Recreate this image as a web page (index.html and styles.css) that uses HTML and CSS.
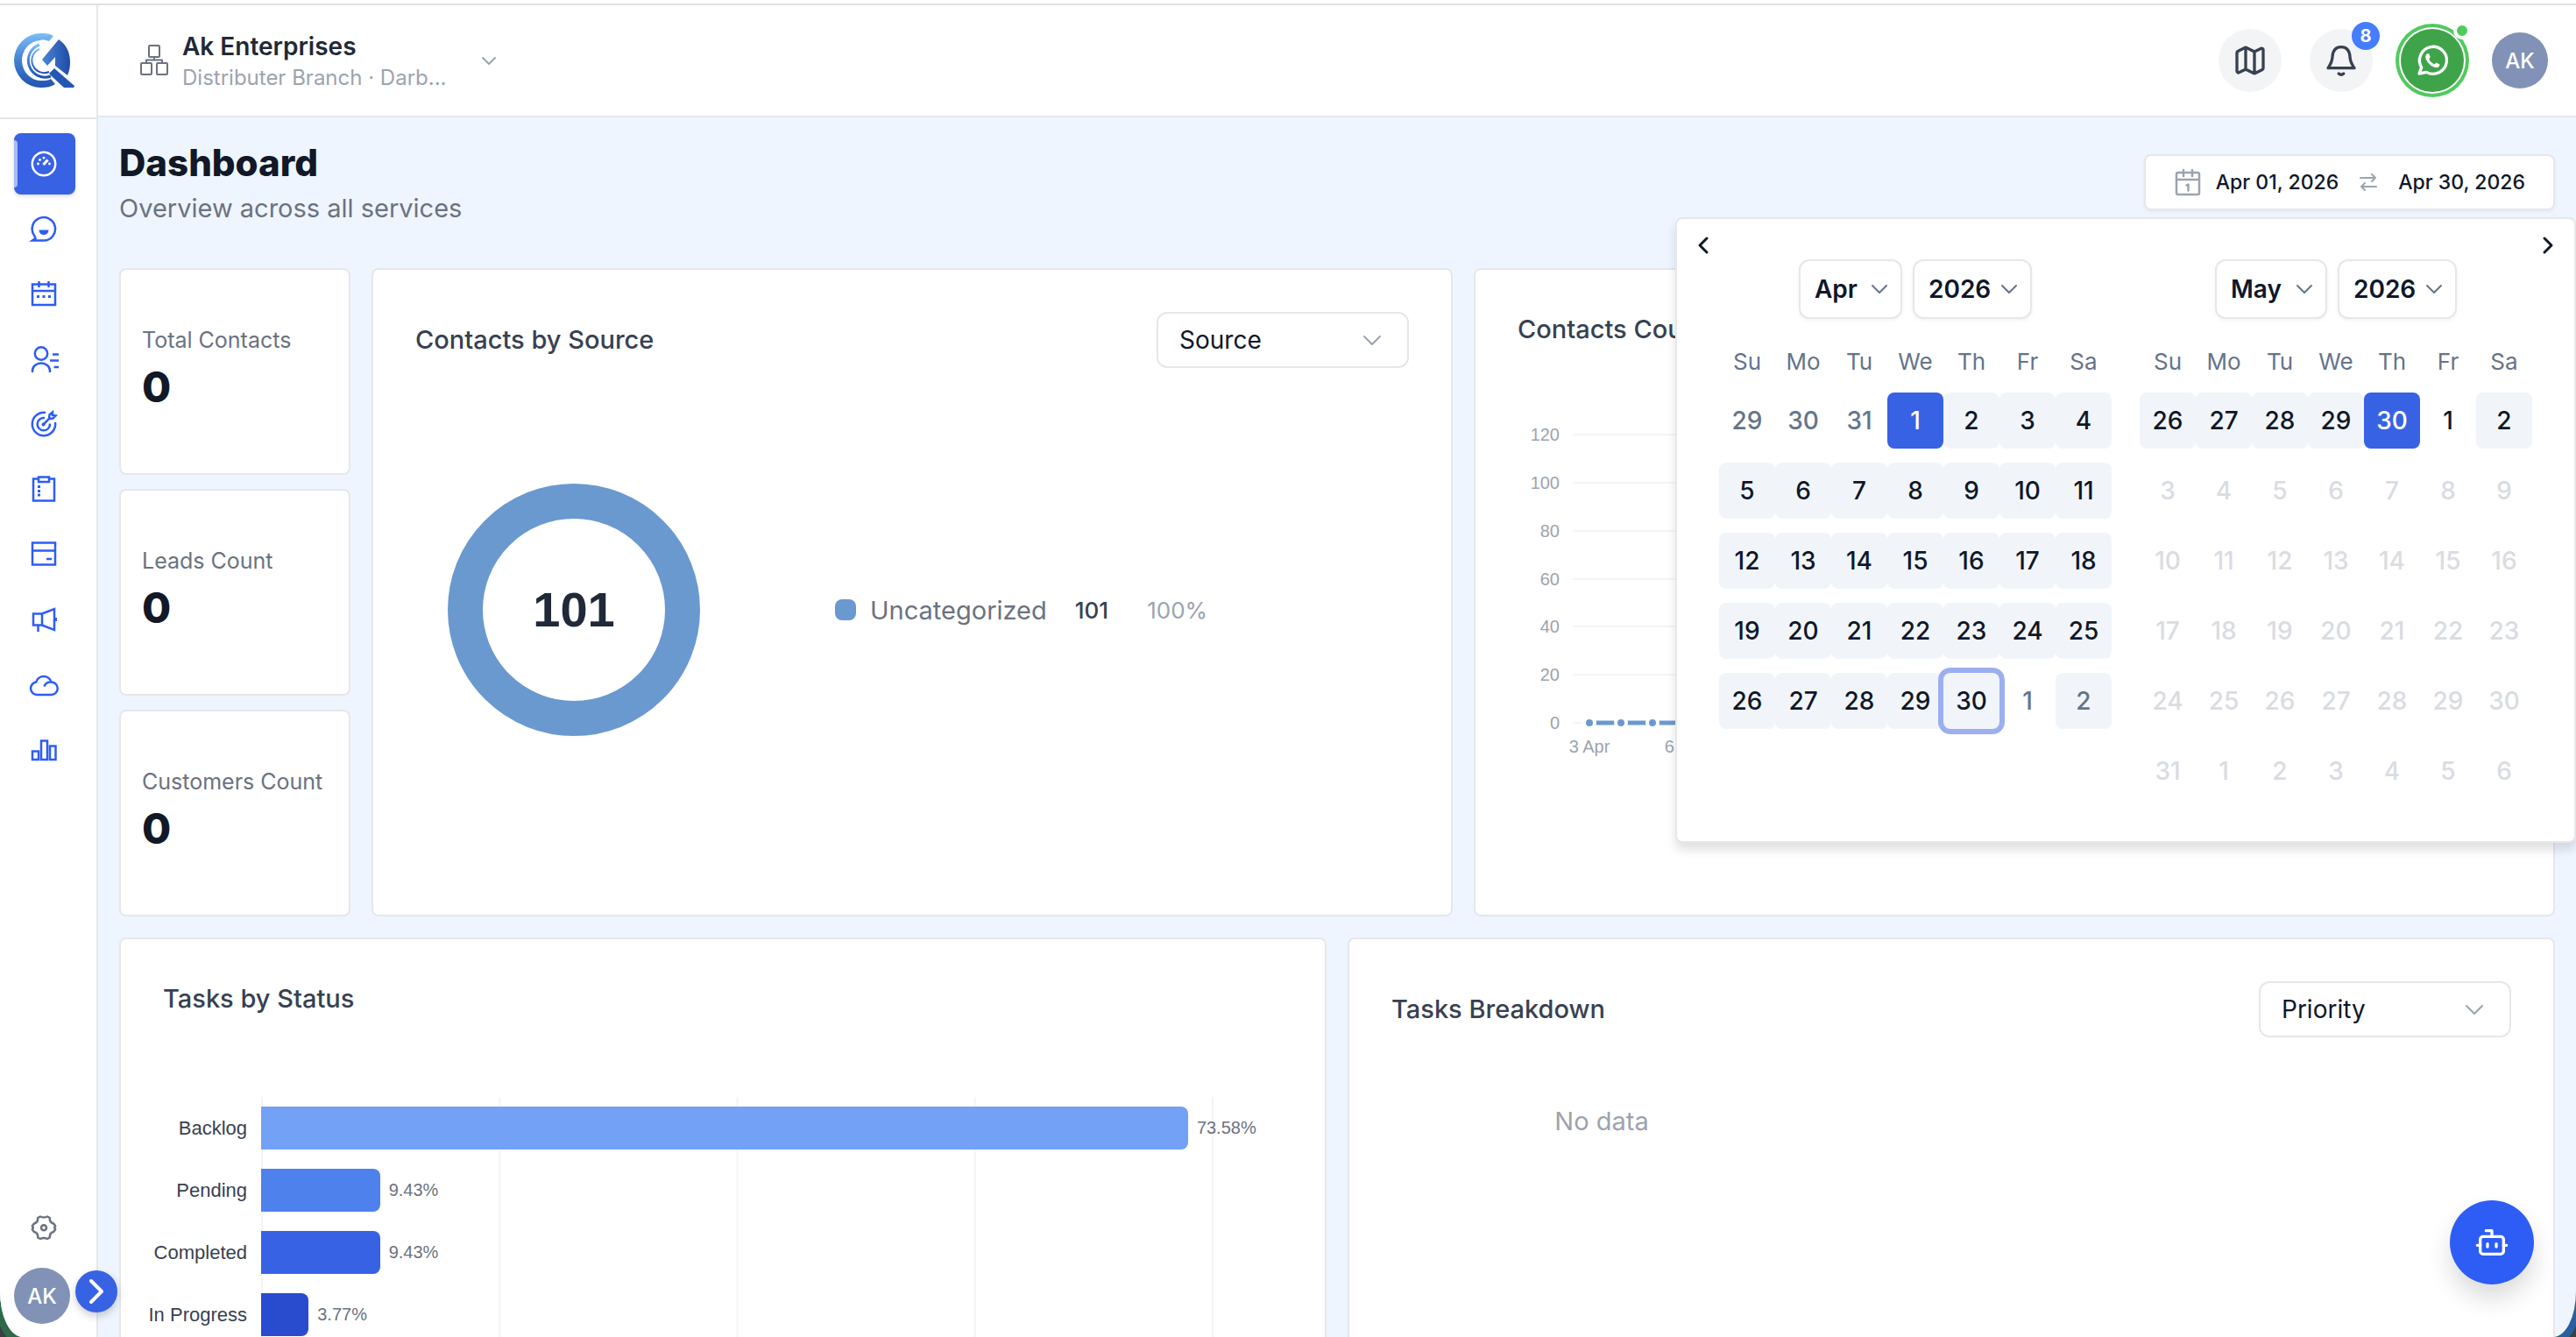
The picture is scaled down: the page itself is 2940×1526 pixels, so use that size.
FILE: index.html
```html
<!DOCTYPE html>
<html lang="en">
<head>
<meta charset="UTF-8">
<meta name="viewport" content="width=device-width, initial-scale=1.0">
<title>Dashboard</title>
<link rel="stylesheet" href="styles.css">
</head>
<body>

<div class="app">
  <aside class="sidebar">
    <a class="logo" href="#" aria-label="Home">
      <svg width="70" height="64" viewBox="0 0 70 64" fill="none">
        <defs>
          <linearGradient id="logoLight" x1="0" y1="0" x2="0" y2="1">
            <stop offset="0" stop-color="#7cbcf8"/>
            <stop offset="0.5" stop-color="#4380d2"/>
            <stop offset="1" stop-color="#2153b0"/>
          </linearGradient>
          <linearGradient id="logoDark" x1="0" y1="0" x2="1" y2="0">
            <stop offset="0" stop-color="#4a86d8"/>
            <stop offset="1" stop-color="#1f4ba6"/>
          </linearGradient>
        </defs>
        <path d="M45 3C40 0 36 0 31 0A31 31 0 0 0 31 62C37 62 42 61 47 58L42 52C39 54 35 54 32 54A22 23 0 0 1 30 8C33 7 37 8 40 9Z" fill="url(#logoLight)"/>
        <path class="ring" d="M29 13A19 19 0 1 0 42 49" stroke-width="3"/>
        <path class="ring" d="M29 18A14 14 0 1 0 40 44" stroke-width="2"/>
        <path d="M51 7C60 13 64 22 64 33C64 39 63 43 61 48L47 37V27L38 37L32 30Z" fill="url(#logoDark)"/>
        <path d="M46 40L69 60L68 62H57L44 50L40 46Z" fill="#2457b4"/>
      </svg>
    </a>
    <nav class="nav" aria-label="Main">
      <a class="nav-link active" href="#" aria-label="Dashboard">
        <svg class="icon" viewBox="0 0 32 32"><circle cx="16" cy="16" r="13.2"/><path d="M15.500 17L20.500 11.500" stroke-width="3.200"/><g class="dots"><circle cx="9.500" cy="16" r="1.400"/><circle cx="11.500" cy="11.500" r="1.400"/><circle cx="16" cy="9.200" r="1.400"/><circle cx="22.500" cy="16" r="1.400"/></g></svg>
      </a>
      <a class="nav-link" href="#" aria-label="Chat">
        <svg class="icon" viewBox="0 0 32 32"><path d="M3 29.500H16A13.200 13.200 0 1 0 5.500 24.500L6.500 27Z"/><path d="M10.500 17.500H21.500A5.500 5.500 0 0 1 10.500 17.500Z" class="solid"/></svg>
      </a>
      <a class="nav-link" href="#" aria-label="Calendar">
        <svg class="icon" viewBox="0 0 32 32"><path d="M3 5.500H29V29H3ZM3 13H29M10.500 2V9M21.500 2V9"/><path d="M8 19.500H11M14.500 19.500H17.500M21 19.500H24" stroke-width="3"/></svg>
      </a>
      <a class="nav-link" href="#" aria-label="Contacts">
        <svg class="icon" viewBox="0 0 32 32"><circle cx="13" cy="9.500" r="7.200"/><path d="M3 31V29A10 8.500 0 0 1 23 29V31M26 10.500H33M23 17.500H33M27.500 25H33"/></svg>
      </a>
      <a class="nav-link" href="#" aria-label="Leads">
        <svg class="icon" viewBox="0 0 32 32"><path d="M18 3A13.200 13.200 0 1 0 29 14M17 9A7.200 7.200 0 1 0 23 15.500M16 16L22 10L22.500 5.500L26 2.500V6L29.500 6.500L26.500 9.500L22 10"/><circle cx="15.500" cy="16.500" r="2" class="solid"/></svg>
      </a>
      <a class="nav-link" href="#" aria-label="Tasks">
        <svg class="icon" viewBox="0 0 32 32"><path d="M10 4.500H4V29.500H28V4.500H22M10 2.500H22V8H10Z"/><path d="M9 13.500H12M9 18.500H12M9 23H12" stroke-width="2.800"/></svg>
      </a>
      <a class="nav-link" href="#" aria-label="Payments">
        <svg class="icon" viewBox="0 0 32 32"><path d="M3 3.500H29V28.500H3ZM3 12.500H29M19 22H25"/></svg>
      </a>
      <a class="nav-link" href="#" aria-label="Campaigns">
        <svg class="icon" viewBox="0 0 32 32"><path d="M4 9.500H14L28 4V28L14 22.500H4ZM14 9.500V22.500M9.500 23V30"/><path d="M28 16H31" stroke-width="4"/></svg>
      </a>
      <a class="nav-link" href="#" aria-label="Cloud">
        <svg class="icon" viewBox="0 0 32 32"><path d="M8 28H24.500A7 7 0 0 0 24.500 13.500A9 9 0 0 0 7.200 13.500A7.300 7.300 0 0 0 8 28ZM16.500 18.500C17.500 15.500 20.500 13.200 24.500 13.500"/></svg>
      </a>
      <a class="nav-link" href="#" aria-label="Reports">
        <svg class="icon" viewBox="0 0 32 32"><path d="M3 18.500H10V28H3ZM13 6.500H20V28H13ZM23 12.500H29.500V28H23Z"/></svg>
      </a>
    </nav>
    <div class="sidebar-bottom">
      <a class="settings" href="#" aria-label="Settings">
        <svg class="icon" viewBox="0 0 32 32"><path d="M12 3.500Q16 5.500 20 3.500L22.800 5Q22.500 10.500 27 11.500Q28.500 13 29.200 14.500Q27.200 16.200 29.200 18Q28.500 19.500 27 21Q22.500 22 22.800 27.500L20 29Q16 27 12 29L9.200 27.500Q9.500 22 5 21Q3.500 19.500 2.800 18Q4.800 16.200 2.800 14.500Q3.500 13 5 11.500Q9.500 10.500 9.200 5Z"/><circle cx="16" cy="16.200" r="3"/></svg>
      </a>
      <button class="avatar" type="button">AK</button>
    </div>
    <button class="toggle" type="button" aria-label="Expand menu">
      <svg width="48" height="48" viewBox="0 0 48 48"><path d="M18 12L30 24L18 36"/></svg>
    </button>
  </aside>

  <div class="main">
    <header class="topbar">
      <button class="org" type="button">
        <svg class="org-icon" width="32" height="36" viewBox="0 0 32 36"><rect x="10" y="1" width="12" height="13" rx="1"/><rect x="1" y="21" width="12" height="13" rx="1"/><rect x="19" y="21" width="12" height="13" rx="1"/><path d="M16 14V17.500M7 21V17.500H25V21"/></svg>
        <span class="org-text">
          <span class="org-name">Ak Enterprises</span>
          <span class="org-branch">Distributer Branch · Darb...</span>
        </span>
        <svg class="chevron" width="20" height="20" viewBox="0 0 20 20"><path d="M3 7L10 14L17 7"/></svg>
      </button>
      <div class="actions">
        <button class="round" type="button" aria-label="Map">
          <svg width="40" height="40" viewBox="0 0 24 24"><path d="M14.100 5.600a2 2 0 0 0 1.800 0l3.700-1.800A1 1 0 0 1 21 4.600v12.800a1 1 0 0 1-.6.900l-4.500 2.300a2 2 0 0 1-1.800 0l-4.200-2.100a2 2 0 0 0-1.800 0l-3.700 1.800A1 1 0 0 1 3 19.400V6.600a1 1 0 0 1 .6-.9l4.500-2.300a2 2 0 0 1 1.800 0ZM15 5.800v15M9 3.200v15"/></svg>
        </button>
        <button class="round" type="button" aria-label="Notifications">
          <svg width="40" height="40" viewBox="0 0 24 24"><path d="M3 17.200H21C19.500 15 18.200 13.200 18 9.500C17.700 5 15.500 2.800 12 2.800S6.300 5 6 9.500C5.800 13.200 4.500 15 3 17.200ZM10.300 21Q12 22.500 13.700 21"/></svg>
          <span class="badge">8</span>
        </button>
        <button class="round whatsapp" type="button" aria-label="WhatsApp">
          <svg width="40" height="40" viewBox="0 0 24 24"><path d="M3 21L4.600 16.700A9.300 9.300 0 1 1 8 20Z"/><path class="phone" d="M8.500 7.300C7.300 8 7 9.500 7.700 11.200C9 14 11 15.900 13.900 16.800C15.500 17.200 17 16.300 17.200 14.800L14.700 13.500L13.500 14.700C11.700 13.900 10.500 12.800 9.700 11L10.700 9.800L9.700 7.300Z"/></svg>
          <span class="online"></span>
        </button>
        <button class="avatar" type="button">AK</button>
      </div>
    </header>

    <main class="content">
      <div class="page-head">
        <div>
          <h1>Dashboard</h1>
          <p class="subtitle">Overview across all services</p>
        </div>
        <div class="range">
          <button class="range-field" type="button">
            <svg class="range-icon" width="32" height="32" viewBox="0 0 32 32"><rect x="3" y="5" width="26" height="25" rx="2"/><path d="M3 13H29M11 2V9M21 2V9M14.500 19.500L16.500 18.500V25.500"/></svg>
            <span>Apr 01, 2026</span>
            <svg class="swap-icon" width="20" height="24" viewBox="0 0 20 24"><path d="M1 7H18M14 3L18 7L14 11M19 17H2M6 13L2 17L6 21"/></svg>
            <span>Apr 30, 2026</span>
          </button>

          <div class="picker">
            <button class="step prev" type="button" aria-label="Previous month">
              <svg width="32" height="32" viewBox="0 0 32 32"><path d="M20 8L12 16L20 24"/></svg>
            </button>
            <button class="step next" type="button" aria-label="Next month">
              <svg width="32" height="32" viewBox="0 0 32 32"><path d="M12 8L20 16L12 24"/></svg>
            </button>
            <div class="month">
              <div class="month-head">
                <span class="select month-select"><select aria-label="Start month"><option>Apr</option></select><svg class="chevron" width="20" height="20" viewBox="0 0 20 20"><path d="M2 6L10 14L18 6"/></svg></span>
                <span class="select year-select"><select aria-label="Start year"><option>2026</option></select><svg class="chevron" width="20" height="20" viewBox="0 0 20 20"><path d="M2 6L10 14L18 6"/></svg></span>
              </div>
              <table class="days" id="april"></table>
            </div>
            <div class="month">
              <div class="month-head">
                <span class="select month-select wide"><select aria-label="End month"><option>May</option></select><svg class="chevron" width="20" height="20" viewBox="0 0 20 20"><path d="M2 6L10 14L18 6"/></svg></span>
                <span class="select year-select"><select aria-label="End year"><option>2026</option></select><svg class="chevron" width="20" height="20" viewBox="0 0 20 20"><path d="M2 6L10 14L18 6"/></svg></span>
              </div>
              <table class="days" id="may"></table>
            </div>
          </div>
        </div>
      </div>

      <div class="row-top">
        <div class="stats">
          <section class="card stat"><h2>Total Contacts</h2><p>0</p></section>
          <section class="card stat"><h2>Leads Count</h2><p>0</p></section>
          <section class="card stat"><h2>Customers Count</h2><p>0</p></section>
        </div>

        <section class="card panel">
          <div class="panel-head">
            <h2>Contacts by Source</h2>
            <span class="select filter"><select aria-label="Group contacts by"><option>Source</option></select><svg class="chevron" width="24" height="24" viewBox="0 0 24 24"><path d="M3 8L12 17L21 8"/></svg></span>
          </div>
          <div class="source">
            <div class="donut">101</div>
            <div class="legend">
              <span class="swatch"></span>
              <span class="legend-name">Uncategorized</span>
              <span class="legend-count">101</span>
              <span class="legend-pct">100%</span>
            </div>
          </div>
        </section>

        <section class="card panel">
          <h2>Contacts Count</h2>
          <svg class="line-chart" id="lineChart" viewBox="0 0 1134 420" role="img" aria-label="Contacts count per day"></svg>
        </section>
      </div>

      <div class="row-bottom">
        <section class="card panel">
          <h2>Tasks by Status</h2>
          <div class="bars">
            <div class="bar-row"><span class="bar-label">Backlog</span><div class="bar-track"><div class="bar backlog" style="width: 97.5%"></div><span class="bar-value">73.58%</span></div></div>
            <div class="bar-row"><span class="bar-label">Pending</span><div class="bar-track"><div class="bar pending" style="width: 12.5%"></div><span class="bar-value">9.43%</span></div></div>
            <div class="bar-row"><span class="bar-label">Completed</span><div class="bar-track"><div class="bar completed" style="width: 12.5%"></div><span class="bar-value">9.43%</span></div></div>
            <div class="bar-row"><span class="bar-label">In Progress</span><div class="bar-track"><div class="bar progress" style="width: 5%"></div><span class="bar-value">3.77%</span></div></div>
          </div>
        </section>

        <section class="card panel">
          <div class="panel-head">
            <h2>Tasks Breakdown</h2>
            <span class="select filter"><select aria-label="Group tasks by"><option>Priority</option></select><svg class="chevron" width="24" height="24" viewBox="0 0 24 24"><path d="M3 8L12 17L21 8"/></svg></span>
          </div>
          <p class="no-data">No data</p>
        </section>
      </div>
    </main>
  </div>

  <button class="fab" type="button" aria-label="Assistant">
    <svg width="40" height="40" viewBox="0 0 24 24"><path d="M12 8V4H8M2 14H4M20 14H22M15 13V15M9 13V15"/><rect x="4" y="8" width="16" height="12" rx="2"/></svg>
  </button>
</div>

<script src="script.js"></script>
</body>
</html>
```
FILE: styles.css
```css
* {
  box-sizing: border-box;
}
body {
  margin: 0;
  height: 100vh;
  overflow: hidden;
  border-top: 4px solid #fff;
  background-color: #3a3f40;
  font-family: Inter, "Liberation Sans", sans-serif;
  font-size: 28px;
  color: #0f172a;
}
h1, h2, p {
  margin: 0;
}
button, select {
  font: inherit;
  color: inherit;
  border: none;
  background: none;
  padding: 0;
  cursor: pointer;
}
svg {
  fill: none;
  stroke: currentColor;
  stroke-width: 2;
  stroke-linecap: round;
  stroke-linejoin: round;
  flex-shrink: 0;
}

.app {
  display: flex;
  height: 100%;
  border-top: 2px solid #e0e0e0;
  border-bottom-left-radius: 26px 52px;
  border-bottom-right-radius: 26px 52px;
  background-color: #eef5fe;
  box-shadow: -6px 6px 0 #2c6a4a, 6px 6px 0 #2a5f9f;
}

/* Sidebar */
.sidebar {
  position: relative;
  display: flex;
  flex-direction: column;
  width: 112px;
  flex-shrink: 0;
  background-color: #fff;
  border-right: 2px solid #e5e7eb;
  border-bottom-left-radius: 26px 52px;
}
.logo {
  display: flex;
  align-items: center;
  height: 130px;
  padding-left: 16px;
  border-bottom: 2px solid #e5e7eb;
}
.logo svg {
  stroke: none;
  stroke-linecap: butt;
}
.logo .ring {
  stroke: url(#logoLight);
}
.nav {
  display: flex;
  flex-direction: column;
  justify-content: space-between;
  height: 738px;
  margin: 16px 0 0 16px;
}
.nav-link {
  display: flex;
  align-items: center;
  justify-content: center;
  width: 70px;
  height: 70px;
  padding-right: 3px;
  border-radius: 8px;
  color: #2d5df4;
}
.nav-link.active {
  position: relative;
  background-color: #3862e4;
  color: #fff;
  box-shadow: 0 2px 4px rgba(0, 0, 0, 0.15);
}
.nav-link.active::before {
  content: "";
  position: absolute;
  left: 0;
  top: 8px;
  bottom: 8px;
  width: 4px;
  border-radius: 0 4px 4px 0;
  background-color: #a9bbf4;
}
.icon {
  width: 32px;
  height: 32px;
  stroke-width: 2.5;
  stroke-linecap: butt;
  stroke-linejoin: miter;
  overflow: visible;
}
.icon .dots, .icon .solid {
  fill: currentColor;
  stroke: none;
}
.sidebar-bottom {
  display: flex;
  flex-direction: column;
  gap: 30px;
  margin-top: auto;
  padding: 0 0 15px 16px;
}
.settings {
  display: flex;
  justify-content: center;
  width: 67px;
  color: #6b7280;
}
.settings .icon {
  stroke-linejoin: round;
}
.avatar {
  width: 64px;
  height: 64px;
  border-radius: 50%;
  background-color: #8192b6;
  color: #fff;
  font-size: 24px;
  font-weight: 500;
}
.toggle {
  position: absolute;
  right: -24px;
  bottom: 28px;
  width: 48px;
  height: 48px;
  border-radius: 50%;
  background-color: #3862e4;
  color: #fff;
  box-shadow: 0 4px 10px rgba(0, 0, 0, 0.2);
}
.toggle svg {
  display: block;
  stroke-width: 4;
}

/* Top bar */
.main {
  flex: 1;
  min-width: 0;
  overflow: hidden;
  border-bottom-right-radius: 26px 52px;
}
.topbar {
  display: flex;
  align-items: center;
  justify-content: space-between;
  height: 128px;
  padding: 0 32px 0 48px;
  background-color: #fff;
  border-bottom: 2px solid #e5e7eb;
}
.org {
  display: flex;
  align-items: center;
  gap: 16px;
  text-align: left;
}
.org-icon {
  color: #6b7280;
}
.org-text {
  display: flex;
  flex-direction: column;
  width: 324px;
  padding-top: 4px;
}
.org-name {
  font-size: 28px;
  line-height: 36px;
  font-weight: 600;
  color: #1f2937;
}
.org-branch {
  font-size: 24px;
  line-height: 36px;
  color: #9ca3af;
}
.chevron {
  color: #9ca3af;
}
.actions {
  display: flex;
  align-items: center;
  gap: 32px;
}
.round {
  position: relative;
  display: flex;
  align-items: center;
  justify-content: center;
  width: 72px;
  height: 72px;
  border-radius: 50%;
  background-color: #f3f4f6;
  color: #374151;
}
.badge {
  position: absolute;
  top: -8px;
  right: -8px;
  width: 32px;
  height: 32px;
  border-radius: 50%;
  background-color: #447dff;
  color: #fff;
  font-size: 20px;
  line-height: 32px;
  font-weight: 700;
  text-align: center;
}
.whatsapp {
  background-color: #3fa34a;
  color: #fff;
  box-shadow: 0 0 0 2px #fff, 0 0 0 6px #51c95f;
}
.whatsapp .phone {
  fill: currentColor;
  stroke: none;
}
.online {
  position: absolute;
  top: -8px;
  right: -8px;
  width: 20px;
  height: 20px;
  border: 4px solid #fff;
  border-radius: 50%;
  background-color: #51c95f;
}

/* Page heading and date range */
.content {
  padding: 24px;
}
.page-head {
  display: flex;
  align-items: center;
  justify-content: space-between;
  margin-bottom: 48px;
}
h1 {
  font-size: 42px;
  line-height: 56px;
  font-weight: 800;
  color: #111827;
}
.subtitle {
  margin-top: 4px;
  font-size: 29px;
  line-height: 40px;
  color: #6b7280;
}
.range {
  position: relative;
}
.range-field {
  display: flex;
  align-items: center;
  gap: 16px;
  height: 64px;
  padding: 0 32px;
  border: 2px solid #e5e7eb;
  border-radius: 8px;
  background-color: #fff;
  box-shadow: 0 2px 4px rgba(0, 0, 0, 0.05);
  font-size: 23px;
  font-weight: 500;
}
.range-icon {
  color: #9ca3af;
  stroke-width: 2.5;
}
.swap-icon {
  margin: 0 8px;
  color: #9ca3af;
}
.picker {
  position: absolute;
  z-index: 5;
  top: calc(100% + 8px);
  right: -24px;
  display: flex;
  gap: 32px;
  padding: 46px 48px 40px;
  border: 2px solid #e5e7eb;
  border-radius: 8px;
  background-color: #fff;
  box-shadow: 0 8px 12px rgba(0, 0, 0, 0.12);
  font-size: 28px;
}
.step {
  position: absolute;
  top: 14px;
  width: 32px;
  height: 32px;
}
.step svg {
  display: block;
  stroke-width: 3;
}
.prev {
  left: 14px;
}
.next {
  right: 14px;
}
.month-head {
  display: flex;
  justify-content: center;
  gap: 12px;
}
.select {
  position: relative;
  display: inline-block;
}
.select select {
  appearance: none;
  width: 100%;
  height: 100%;
  border: 2px solid #e5e7eb;
  border-radius: 12px;
  background-color: #fff;
}
.select .chevron {
  position: absolute;
  top: 0;
  bottom: 0;
  right: 16px;
  margin: auto;
  pointer-events: none;
}
.month-select, .year-select {
  width: 118px;
  height: 68px;
  font-weight: 600;
}
.month-select.wide {
  width: 128px;
}
.year-select {
  width: 136px;
}
.month-select select, .year-select select {
  padding-left: 16px;
  box-shadow: 0 2px 4px rgba(0, 0, 0, 0.05);
}
.month-head .chevron {
  color: #64748b;
}
.days {
  margin-top: 22px;
  border-collapse: separate;
  border-spacing: 0;
}
.days th {
  width: 64px;
  height: 54px;
  padding: 0 0 2px;
  font-size: 26px;
  font-weight: 400;
  color: #64748b;
}
.days td {
  height: 80px;
  padding: 8px 0;
}
.days button {
  display: block;
  width: 64px;
  height: 64px;
  border-radius: 8px;
  font-weight: 500;
}
.days .outside {
  color: #64748b;
}
.days .in-range {
  background-color: #f1f5f9;
}
.days .selected {
  background-color: #3862e4;
  color: #fff;
}
.days .focused {
  position: relative;
  box-shadow: 0 0 0 6px #9baef0;
}
.days button:disabled {
  color: #d9dce2;
}

/* Cards */
.card {
  border: 2px solid #e5e7eb;
  border-radius: 8px;
  background-color: #fff;
}
.row-top {
  display: grid;
  grid-template-columns: 264px 1fr 1fr;
  gap: 24px;
  margin-bottom: 24px;
}
.row-bottom {
  display: grid;
  grid-template-columns: 1fr 1fr;
  gap: 24px;
  height: 560px;
}
.stats {
  display: grid;
  gap: 16px;
}
.stat {
  height: 236px;
  padding: 60px 24px 0;
}
.stat h2 {
  font-size: 25px;
  line-height: 40px;
  font-weight: 400;
  color: #6b7280;
  white-space: nowrap;
}
.stat p {
  font-size: 48px;
  line-height: 68px;
  font-weight: 800;
  color: #111827;
}
.panel {
  display: flex;
  flex-direction: column;
  min-width: 0;
  padding: 48px;
}
.panel h2 {
  font-size: 29px;
  line-height: 40px;
  font-weight: 500;
  color: #374151;
}
.panel-head {
  display: flex;
  align-items: center;
  justify-content: space-between;
}
.filter {
  width: 288px;
  height: 64px;
}
.filter select {
  padding-left: 24px;
}
.filter .chevron {
  right: 30px;
}

.source {
  display: flex;
  align-items: center;
  flex: 1;
  gap: 154px;
  padding: 0 0 24px 37px;
}
.donut {
  width: 288px;
  height: 288px;
  border: 40px solid #6a99d0;
  border-radius: 50%;
  font-family: "Liberation Sans", sans-serif;
  font-size: 56px;
  line-height: 208px;
  font-weight: 700;
  color: #1f2937;
  text-align: center;
}
.legend {
  display: flex;
  align-items: center;
}
.swatch {
  width: 24px;
  height: 24px;
  margin-right: 16px;
  border-radius: 8px;
  background-color: #6a99d0;
}
.legend-name {
  font-size: 29px;
  color: #6b7280;
}
.legend-count {
  margin: 0 44px 0 32px;
  font-size: 26px;
  font-weight: 500;
  color: #374151;
}
.legend-pct {
  font-size: 26px;
  color: #9ca3af;
}

/* Charts */
.line-chart {
  width: 100%;
  margin-top: 60px;
  font-family: "Liberation Sans", sans-serif;
  font-size: 20px;
}
.line-chart text {
  fill: #9ca3af;
  stroke: none;
}
.line-chart .grid {
  stroke: #f3f4f6;
}
.line-chart .series {
  stroke: #6a99d0;
  stroke-width: 5;
}
.line-chart .point {
  fill: #6a99d0;
  stroke: #fff;
  stroke-width: 4;
}
.bars {
  margin: 92px 79px 0 -24px;
  font-family: "Liberation Sans", sans-serif;
}
.bar-row {
  display: grid;
  grid-template-columns: 120px 1fr;
  gap: 16px;
  align-items: center;
  height: 71px;
}
.bar-label {
  font-size: 22px;
  color: #374151;
  text-align: right;
  white-space: nowrap;
}
.bar-track {
  display: flex;
  align-items: center;
  height: 71px;
  border-right: 2px solid #f3f4f6;
  background-image: linear-gradient(to right, #f3f4f6 2px, transparent 2px);
  background-size: 25% 100%;
}
.bar {
  flex-shrink: 0;
  height: 49px;
  border-radius: 0 8px 8px 0;
}
.backlog {
  background-color: #72a1f6;
}
.pending {
  background-color: #4f81ec;
}
.completed {
  background-color: #3862e4;
}
.progress {
  background-color: #294ccf;
}
.bar-value {
  margin-left: 10px;
  font-size: 20px;
  color: #6b7280;
}
.no-data {
  width: 480px;
  margin-top: 76px;
  font-size: 29px;
  line-height: 40px;
  color: #9ca3af;
  text-align: center;
}

.fab {
  position: fixed;
  right: 48px;
  bottom: 60px;
  display: flex;
  align-items: center;
  justify-content: center;
  width: 96px;
  height: 96px;
  border-radius: 50%;
  background-color: #2d5df4;
  color: #fff;
  box-shadow: 0 16px 28px rgba(0, 0, 0, 0.14);
}
```
FILE: script.js
```js
var weekdays = ['Su', 'Mo', 'Tu', 'We', 'Th', 'Fr', 'Sa'];

// Fills a month table, starting at the given date and using one class per day
function drawMonth(id, start, weeks, classFor) {
  var html = '<thead><tr>';
  weekdays.forEach(function (d) { html += '<th scope="col">' + d + '</th>'; });
  html += '</tr></thead><tbody>';
  var day = new Date(start);
  for (var w = 0; w < weeks; w++) {
    html += '<tr>';
    for (var i = 0; i < 7; i++) {
      var cls = classFor(w * 7 + i);
      html += '<td><button type="button" class="' + cls + '"' + (cls === 'off' ? ' disabled' : '') + '>' + day.getDate() + '</button></td>';
      day.setDate(day.getDate() + 1);
    }
    html += '</tr>';
  }
  document.getElementById(id).innerHTML = html + '</tbody>';
}

drawMonth('april', new Date(2026, 2, 29), 5, function (n) {
  if (n < 3) return 'outside';
  if (n === 3) return 'selected';
  if (n === 32) return 'in-range focused';
  if (n === 33) return 'outside';
  if (n === 34) return 'outside in-range';
  return 'in-range';
});

drawMonth('may', new Date(2026, 3, 26), 6, function (n) {
  if (n === 4) return 'selected';
  if (n === 5) return '';
  if (n < 7) return 'in-range';
  return 'off';
});

// Contacts count per day
function drawLineChart() {
  var svg = '';
  var bottom = 369;
  for (var v = 0; v <= 120; v += 20) {
    var y = Math.round(bottom - v * 2.74);
    svg += '<line class="grid" x1="64" x2="1134" y1="' + y + '" y2="' + y + '"/>';
    svg += '<text x="48" y="' + (y + 7) + '" text-anchor="end">' + v + '</text>';
  }
  svg += '<line class="series" x1="82" x2="1059" y1="' + bottom + '" y2="' + bottom + '"/>';
  for (var d = 3; d <= 30; d++) {
    var x = Math.round(82 + (d - 3) * 36.2);
    svg += '<circle class="point" cx="' + x + '" cy="' + bottom + '" r="6"/>';
    if (d % 3 === 0) {
      svg += '<text x="' + x + '" y="' + (bottom + 34) + '" text-anchor="middle">' + d + ' Apr</text>';
    }
  }
  document.getElementById('lineChart').innerHTML = svg;
}

drawLineChart();
```
